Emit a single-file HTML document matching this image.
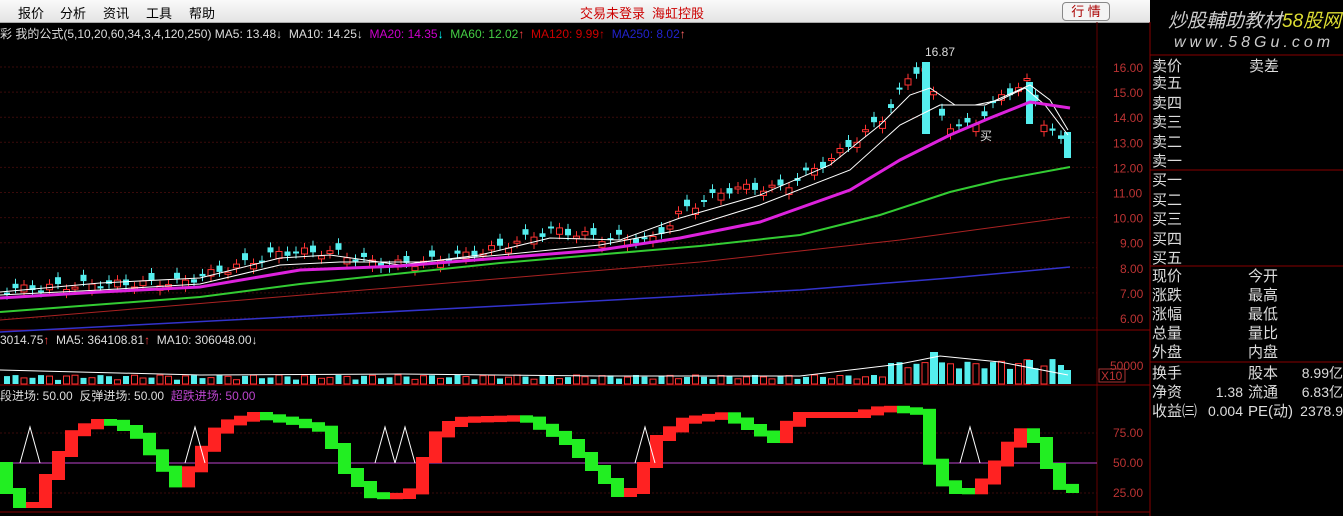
<!DOCTYPE html>
<html><head><meta charset="utf-8"><style>
*{margin:0;padding:0}
body{width:1343px;height:516px;background:#000;overflow:hidden;position:relative;font-family:"Liberation Sans","Noto Sans CJK SC",sans-serif}
#menu{position:absolute;left:0;top:0;width:1150px;height:22px;background:linear-gradient(#fafafa,#e4e4e4);border-bottom:1px solid #aaa}
#menu span{position:absolute;top:3px;font-size:13px;color:#000}
.t{position:absolute;white-space:nowrap;font-size:12px}
.rp{position:absolute;left:1152px;font-size:15px;color:#ddd;white-space:nowrap}
</style></head><body>
<div id="menu">
<span style="left:18px">报价</span><span style="left:60px">分析</span><span style="left:103px">资讯</span><span style="left:146px">工具</span><span style="left:189px">帮助</span>
<span style="left:580px;color:#c00">交易未登录</span><span style="left:652px;color:#c00">海虹控股</span>
<div style="position:absolute;left:1062px;top:2px;width:46px;height:17px;border:1px solid #888;border-radius:4px;background:#f4f4f4;font-size:13px;color:#a00;text-align:center;line-height:17px">行 情</div>
</div>
<svg id="s" width="1343" height="516" style="position:absolute;left:0;top:0"></svg>
<div class="t" style="left:0;top:25px;color:#ddd">彩 我的公式(5,10,20,60,34,3,4,120,250) MA5: 13.48↓ &nbsp;MA10: 14.25↓ &nbsp;<span style="color:#c0c">MA20: 14.35</span><span style="color:#0ff">↓</span> &nbsp;<span style="color:#4c4">MA60: 12.02</span><span style="color:#f44">↑</span> &nbsp;<span style="color:#c00">MA120: 9.99↑</span> &nbsp;<span style="color:#22c">MA250: 8.02</span><span style="color:#f66">↑</span></div>
<div class="t" style="left:0;top:333px;color:#ddd">3014.75<span style="color:#f44">↑</span> &nbsp;MA5: 364108.81<span style="color:#f44">↑</span> &nbsp;MA10: 306048.00↓</div>
<div class="t" style="left:0;top:387px;color:#ddd">段进场: 50.00 &nbsp;反弹进场: 50.00 &nbsp;<span style="color:#b4c">超跌进场: 50.00</span></div>
<div class="t" style="left:925px;top:45px;color:#ddd">16.87</div>
<div class="t" style="left:980px;top:127px;color:#ddd">买</div>
<div style="position:absolute;left:1168px;top:6px;font-size:19px;font-style:italic;color:#ccc;white-space:nowrap">炒股輔助教材<span style="color:#dd3">58股网</span></div>
<div style="position:absolute;left:1174px;top:34px;font-size:16px;font-style:italic;color:#ccc;letter-spacing:4px;white-space:nowrap">www.58Gu.com</div>
<div class="rp" style="top:55px">卖价<span style="position:absolute;left:97px">卖差</span></div>
<div class="rp" style="top:74px;line-height:19.5px">卖五<br>卖四<br>卖三<br>卖二<br>卖一</div>
<div class="rp" style="top:171px;line-height:19.5px">买一<br>买二<br>买三<br>买四<br>买五</div>
<div class="rp" style="top:267px;line-height:19px">现价<br>涨跌<br>涨幅<br>总量<br>外盘</div>
<div class="rp" style="left:1248px;top:267px;line-height:19px">今开<br>最高<br>最低<br>量比<br>内盘</div>
<div class="rp" style="top:364px;line-height:19px">换手<br>净资<br>收益㈢</div>
<div class="rp" style="left:1200px;top:364px;width:43px;text-align:right;line-height:19px;font-size:14px"><br>1.38<br>0.004</div>
<div class="rp" style="left:1248px;top:364px;line-height:19px">股本<br>流通<br>PE(动)</div>
<div class="rp" style="left:1295px;top:364px;width:48px;text-align:right;line-height:19px;font-size:14px">8.99亿<br>6.83亿<br>2378.9</div>
<script>
(function(){
var s=document.getElementById('s'),h='';
function L(x1,y1,x2,y2,c,w,d){h+='<line x1="'+x1+'" y1="'+y1+'" x2="'+x2+'" y2="'+y2+'" stroke="'+c+'" stroke-width="'+(w||1)+'"'+(d?' stroke-dasharray="'+d+'"':'')+'/>';}
function T(x,y,t,c){h+='<text x="'+x+'" y="'+y+'" fill="'+c+'" font-size="12" font-family="Liberation Sans">'+t+'</text>';}
var prices=[16,15,14,13,12,11,10,9,8,7,6];
prices.forEach(function(p){var y=67+(16-p)*25.1;L(0,y,1097,y,'#3a0a0a',1,'2,2');T(1100+(p>=10?13:20),y+5,p.toFixed(2),'#b33');});
L(1097,22,1097,516,'#600');L(1150,22,1150,516,'#800');
L(0,330,1150,330,'#800');L(0,385,1150,385,'#800');L(0,512,1150,512,'#800');
L(1150,55,1343,55,'#800');L(1150,170,1343,170,'#800');L(1150,266,1343,266,'#800');L(1150,362,1343,362,'#800');
[433,493].forEach(function(y){L(0,y,1097,y,'#3a0a0a',1,'2,2');});
T(1113,437,'75.00','#b33');T(1113,467,'50.00','#b33');T(1113,497,'25.00','#b33');T(1110,370,'50000','#b33');
h+='<rect x="1099" y="369" width="26" height="13" fill="none" stroke="#a33"/>';T(1101,380,'X10','#b33');
L(0,463,1097,463,'#b4c');
function interp(pts,x){for(var i=1;i<pts.length;i++){if(x<=pts[i][0]){var a=pts[i-1],b=pts[i];return a[1]+(b[1]-a[1])*(x-a[0])/(b[0]-a[0]);}}return pts[pts.length-1][1];}
function pl(pts,c,w){h+='<polyline fill="none" stroke="'+c+'" stroke-width="'+w+'" points="'+pts.map(function(p){return p.join(',')}).join(' ')+'"/>';}
var P=[[0,290],[80,285],[180,282],[280,252],[330,252],[380,265],[420,262],[480,252],[550,230],[600,238],[650,240],[680,210],[730,188],[780,188],[830,158],[880,118],[905,80],[920,62],[935,110],[950,128],[970,125],[1000,95],[1025,82],[1040,120],[1068,155]];
var k=0;
for(var x=4;x<1060;x+=8.5){k++;var cl=interp(P,x)+Math.sin(k*1.7)*4;var op=cl+Math.sin(k*2.3+1)*7;var up=op>cl;var yt=Math.min(op,cl),yb=Math.max(op,cl);if(yb-yt<2)yb=yt+2;
var xx=x.toFixed(1);
L((x+3).toFixed(1),(yt-5).toFixed(1),(x+3).toFixed(1),(yb+5).toFixed(1),up?'#f33':'#5ee');
if(up)h+='<rect x="'+xx+'" y="'+yt.toFixed(1)+'" width="6" height="'+(yb-yt).toFixed(1)+'" fill="#000" stroke="#f33" stroke-width="1"/>';else h+='<rect x="'+xx+'" y="'+yt.toFixed(1)+'" width="6" height="'+(yb-yt).toFixed(1)+'" fill="#5ee"/>';
var vh=4+Math.abs(Math.sin(k*0.9))*5+(x>880?(6+Math.abs(Math.sin(k))*10):0);
if(up)h+='<rect x="'+xx+'" y="'+(384-vh).toFixed(1)+'" width="6" height="'+vh.toFixed(1)+'" fill="none" stroke="#f33"/>';else h+='<rect x="'+xx+'" y="'+(384-vh).toFixed(1)+'" width="6" height="'+vh.toFixed(1)+'" fill="#5ee"/>';}
h+='<rect x="922" y="62" width="8" height="72" fill="#5ee"/><rect x="1026" y="82" width="7" height="42" fill="#5ee"/><rect x="1064" y="132" width="7" height="26" fill="#5ee"/>';
h+='<rect x="930" y="352" width="8" height="32" fill="#5ee"/><rect x="1026" y="360" width="7" height="24" fill="#5ee"/><rect x="1064" y="370" width="7" height="14" fill="#5ee"/>';
pl([[0,292],[100,283],[200,278],[280,258],[330,255],[400,265],[480,255],[550,238],[620,240],[680,218],[760,195],[830,165],[880,125],[910,95],[930,88],[955,105],[975,105],[1000,100],[1025,88],[1045,105],[1068,135]],'#fff',1);
pl([[0,295],[100,290],[200,284],[280,265],[340,262],[420,262],[500,255],[600,245],[680,230],[760,205],[850,170],[900,125],[940,105],[985,105],[1030,85],[1050,100],[1068,130]],'#fff',1);
pl([[0,298],[100,292],[200,287],[300,270],[400,266],[500,258],[600,250],[680,238],[760,222],[850,190],[900,160],[950,135],[990,118],[1030,102],[1070,108]],'#d2d',3);
pl([[0,312],[200,297],[300,284],[500,263],[700,246],[800,235],[880,215],[950,192],[1000,180],[1070,167]],'#3c3',2);
pl([[0,320],[400,287],[700,262],[900,240],[1070,217]],'#a22',1);
pl([[0,332],[500,306],[800,290],[950,278],[1070,267]],'#33c',1.5);
pl([[0,370],[200,375],[400,374],[600,376],[800,376],[900,364],[940,356],[1000,362],[1068,375]],'#fff',1);
var O=[[0,465],[20,505],[40,505],[55,470],[80,430],[110,420],[140,432],[170,470],[185,488],[200,460],[225,425],[260,415],[300,422],[330,430],[350,470],[375,495],[400,497],[420,490],[435,440],[460,420],[530,418],[570,440],[600,470],[625,495],[640,490],[660,440],[690,420],[730,415],[760,430],[780,440],[800,415],[860,415],[890,408],[925,412],[935,460],[950,485],[970,495],[990,480],[1010,450],[1025,430],[1040,440],[1055,470],[1068,490]];
var prev=interp(O,0);
for(var x2=0;x2<1070;x2+=13){var v=interp(O,x2+13);var a=Math.min(prev,v)-3,b=Math.max(prev,v)+3;h+='<rect x="'+x2+'" y="'+a.toFixed(1)+'" width="13" height="'+(b-a).toFixed(1)+'" fill="'+(v>prev?'#2e2':'#f22')+'"/>';prev=v;}
[30,195,385,405,645,970].forEach(function(x){pl([[x-10,463],[x,427],[x+10,463]],'#fff',1);});
s.innerHTML=h;
})();
</script>
</body></html>
